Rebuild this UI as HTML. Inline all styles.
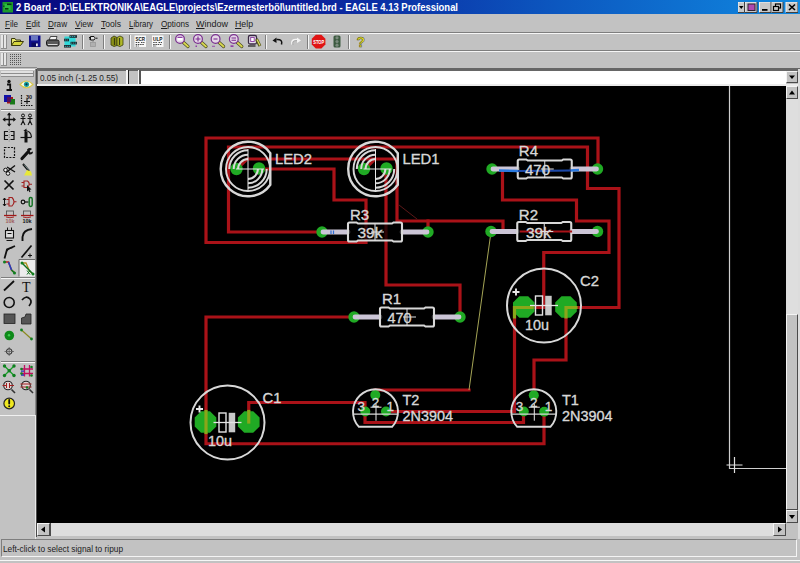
<!DOCTYPE html>
<html><head><meta charset="utf-8"><title>2 Board - EAGLE 4.13 Professional</title>
<style>
*{box-sizing:border-box;margin:0;padding:0}
html,body{width:800px;height:563px;overflow:hidden;background:#c2c2c2;font-family:"Liberation Sans",sans-serif;font-size:10px;color:#1c1c1c}
#app{position:relative;width:800px;height:563px;background:#c2c2c2;overflow:hidden}
#app div,#app span.ft,#app svg{position:absolute}
.ft{white-space:nowrap;transform-origin:0 50%;display:block}
.ft u{text-decoration:underline}
.dk{background:#7e7e7e}.lt{background:#f6f6f6}.bk{background:#000}
#title{left:0;top:0;width:800px;height:13.5px;background:linear-gradient(90deg,#08087e 0%,#0a1a96 35%,#0c58c0 70%,#1088e0 100%)}
.btn{background:#c2c2c2;border:1px solid;border-color:#f4f4f4 #4a4a4a #4a4a4a #f4f4f4}
.trk{background:#dedede}
</style></head><body><div id="app">

<div id="title">
<svg style="left:2px;top:1px" width="12" height="12" viewBox="0 0 12 12"><rect x="0.500" y="1" width="10.500" height="10.500" fill="#1c9a2c"/><rect x="2.500" y="3" width="6" height="6" fill="#30c848" opacity="0.700"/><rect x="5" y="2.500" width="4.500" height="1.600" fill="#083a10"/><rect x="3" y="7" width="3.500" height="1.600" fill="#083a10"/><rect x="1" y="4.500" width="1.500" height="1.500" fill="#0a5a18"/></svg>
<span class="ft" style="left:16px;top:0.8px;font-size:10px;line-height:14px;color:#fff;font-weight:bold;transform:scaleX(0.9436)">2 Board - D:\ELEKTRONIKA\EAGLE\projects\Ezermesterböl\untitled.brd - EAGLE 4.13 Professional</span>
</div>
<svg style="left:738px;top:2px" width="60" height="11" viewBox="0 0 60 11">
<rect x="0" y="0" width="6.500" height="10.500" fill="#c8c8c8"/><path d="M1 4h4.500l-2.250 3z" fill="#000"/>
<rect x="7" y="0" width="12" height="10.500" fill="#c8c8c8"/><rect x="10" y="2" width="7" height="6.500" fill="#b048b0" stroke="#302030" stroke-width="1"/>
<rect x="21.500" y="0" width="11.500" height="10.500" fill="#c8c8c8"/><rect x="24" y="7" width="5.500" height="1.800" fill="#000"/>
<rect x="33.500" y="0" width="11.500" height="10.500" fill="#c8c8c8"/><rect x="37.500" y="2" width="5" height="4" fill="none" stroke="#000" stroke-width="1.200"/><rect x="35.500" y="4.500" width="5" height="4" fill="#c8c8c8" stroke="#000" stroke-width="1.200"/>
<rect x="48" y="0" width="12" height="10.500" fill="#c8c8c8"/><path d="M51 2.500l6 5.500M57 2.500l-6 5.500" stroke="#000" stroke-width="1.600"/>
<path d="M0 10.500V0H6.500M7 10.500V0H19M21.500 10.500V0H33M33.500 10.500V0H45M48 10.500V0H60" fill="none" stroke="#f4f4f4" stroke-width="1"/>
<path d="M0 10.500H6.500V0M7 10.500H19V0M21.500 10.500H33V0M33.500 10.500H45V0M48 10.500H60V0" fill="none" stroke="#404040" stroke-width="1"/>
</svg>
<span class="ft" style="left:5px;top:17.3px;font-size:9.5px;line-height:14px;color:#202020;transform:scaleX(0.8492)"><u>F</u>ile</span>
<span class="ft" style="left:26px;top:17.3px;font-size:9.5px;line-height:14px;color:#202020;transform:scaleX(0.8552)"><u>E</u>dit</span>
<span class="ft" style="left:48px;top:17.3px;font-size:9.5px;line-height:14px;color:#202020;transform:scaleX(0.8570)"><u>D</u>raw</span>
<span class="ft" style="left:75px;top:17.3px;font-size:9.5px;line-height:14px;color:#202020;transform:scaleX(0.8815)"><u>V</u>iew</span>
<span class="ft" style="left:101px;top:17.3px;font-size:9.5px;line-height:14px;color:#202020;transform:scaleX(0.9018)"><u>T</u>ools</span>
<span class="ft" style="left:129px;top:17.3px;font-size:9.5px;line-height:14px;color:#202020;transform:scaleX(0.8265)"><u>L</u>ibrary</span>
<span class="ft" style="left:161px;top:17.3px;font-size:9.5px;line-height:14px;color:#202020;transform:scaleX(0.8552)"><u>O</u>ptions</span>
<span class="ft" style="left:196px;top:17.3px;font-size:9.5px;line-height:14px;color:#202020;transform:scaleX(0.9471)"><u>W</u>indow</span>
<span class="ft" style="left:235px;top:17.3px;font-size:9.5px;line-height:14px;color:#202020;transform:scaleX(0.9212)"><u>H</u>elp</span>
<div class="dk" style="left:0px;top:32px;width:800px;height:1px"></div><div class="lt" style="left:0px;top:33px;width:800px;height:1px"></div>
<div class="dk" style="left:0px;top:50px;width:800px;height:1px"></div><div class="lt" style="left:0px;top:51px;width:800px;height:1px"></div>
<div style="left:0;top:67px;width:37px;height:1px;background:#8a8a8a"></div>
<div style="left:1px;top:35px;width:2px;height:14px;background:#e6e6e6;border-right:1px solid #8e8e8e;border-bottom:1px solid #8e8e8e;width:3px"></div>
<div style="left:4px;top:35px;width:2px;height:14px;background:#e6e6e6;border-right:1px solid #8e8e8e;border-bottom:1px solid #8e8e8e;width:3px"></div>
<div style="left:1px;top:53px;width:2px;height:13px;background:#e6e6e6;border-right:1px solid #8e8e8e;border-bottom:1px solid #8e8e8e;width:3px"></div>
<div style="left:4px;top:53px;width:2px;height:13px;background:#e6e6e6;border-right:1px solid #8e8e8e;border-bottom:1px solid #8e8e8e;width:3px"></div>
<div class="dk" style="left:82px;top:35px;width:1px;height:14px"></div><div class="lt" style="left:83px;top:35px;width:1px;height:14px"></div>
<div class="dk" style="left:103px;top:35px;width:1px;height:14px"></div><div class="lt" style="left:104px;top:35px;width:1px;height:14px"></div>
<div class="dk" style="left:129px;top:35px;width:1px;height:14px"></div><div class="lt" style="left:130px;top:35px;width:1px;height:14px"></div>
<div class="dk" style="left:169px;top:35px;width:1px;height:14px"></div><div class="lt" style="left:170px;top:35px;width:1px;height:14px"></div>
<div class="dk" style="left:265px;top:35px;width:1px;height:14px"></div><div class="lt" style="left:266px;top:35px;width:1px;height:14px"></div>
<div class="dk" style="left:307px;top:35px;width:1px;height:14px"></div><div class="lt" style="left:308px;top:35px;width:1px;height:14px"></div>
<div class="dk" style="left:348px;top:35px;width:1px;height:14px"></div><div class="lt" style="left:349px;top:35px;width:1px;height:14px"></div>
<svg style="left:0;top:33px" width="400" height="18" viewBox="0 33 400 18" font-family="Liberation Sans, sans-serif"><path d="M11.500 45.500V38.500h3.500l1 1.500h4.500v2" fill="#e8e870" stroke="#3a3a10" stroke-width="1"/><path d="M11.500 45.500l2.500-4h9.500l-3 4z" fill="#d6d640" stroke="#3a3a10" stroke-width="1"/><rect x="29" y="35.500" width="11.500" height="11.500" fill="#10108c"/><rect x="31" y="35.500" width="7" height="5" fill="#6a78c0"/><rect x="31.500" y="42.500" width="6.500" height="4.500" fill="#0a0a60"/><rect x="36" y="43.500" width="1.800" height="2.700" fill="#e8e8f8"/><path d="M49 40l1.500-3.500h6.500l-1 3.500z" fill="#f4f4f4" stroke="#222" stroke-width="0.800"/><path d="M46.500 41.500q0-1.500 2-1.500h8.500q2 0 2 1.500v3q0 1-1.500 1.500h-9.500q-1.500-0.500-1.500-1.500z" fill="#5a5a5a" stroke="#1a1a1a" stroke-width="1"/><path d="M48 44.500h9.500" stroke="#d8d8d8" stroke-width="1"/><rect x="64.500" y="36.500" width="11" height="10" fill="#30d8d8"/><rect x="69.5" y="35.2" width="7.5" height="2.600" fill="#202830"/><rect x="70.3" y="36.05" width="0.900" height="0.900" fill="#40e0e0"/><rect x="72.3" y="36.05" width="0.900" height="0.900" fill="#40e0e0"/><rect x="74.3" y="36.05" width="0.900" height="0.900" fill="#40e0e0"/><rect x="64" y="38.7" width="5" height="2.600" fill="#202830"/><rect x="64.8" y="39.55" width="0.900" height="0.900" fill="#40e0e0"/><rect x="66.8" y="39.55" width="0.900" height="0.900" fill="#40e0e0"/><rect x="70.5" y="41.8" width="6.5" height="2.600" fill="#202830"/><rect x="71.3" y="42.65" width="0.900" height="0.900" fill="#40e0e0"/><rect x="73.3" y="42.65" width="0.900" height="0.900" fill="#40e0e0"/><rect x="75.3" y="42.65" width="0.900" height="0.900" fill="#40e0e0"/><rect x="64" y="45" width="7" height="2.600" fill="#202830"/><rect x="64.8" y="45.85" width="0.900" height="0.900" fill="#40e0e0"/><rect x="66.8" y="45.85" width="0.900" height="0.900" fill="#40e0e0"/><rect x="68.8" y="45.85" width="0.900" height="0.900" fill="#40e0e0"/><path d="M90.500 36.500h3.500q2.500 1.500 0 3.500h-3.500zM89 37.500h1.500M89 39h1.500M96 38.200h1.500" fill="#e0e0e0" stroke="#111" stroke-width="1"/><rect x="90.500" y="42.500" width="5" height="4" fill="#b0b0b0" stroke="#9a9a9a" stroke-width="0.800"/><path d="M93 40.500v1.500" stroke="#888" stroke-width="1"/><path d="M111 38l3-2 3 1.500v8l-3 1-3-1.500z" fill="#8a9018" stroke="#3a3c10" stroke-width="0.800"/><path d="M117 37.500l3-1.500 3 1.500v7.500l-3 1.500-3-1z" fill="#b0b828" stroke="#3a3c10" stroke-width="0.800"/><path d="M114.500 38v7M119.500 38v7" stroke="#3a3c10" stroke-width="1.200"/><rect x="134.5" y="35.500" width="11.500" height="11.500" fill="#f8f8f8"/><text x="135.5" y="40.600" font-size="5.200" font-weight="bold" fill="#111" textLength="9.500" lengthAdjust="spacingAndGlyphs">SCR</text><path d="M135.7 42.500h4M141 42.500h3.500M135.7 44.500h8.500M135.7 46h3" stroke="#333" stroke-width="0.900" stroke-dasharray="1.500 0.700"/><rect x="152" y="35.500" width="11.500" height="11.500" fill="#f8f8f8"/><text x="153" y="40.600" font-size="5.200" font-weight="bold" fill="#111" textLength="9.500" lengthAdjust="spacingAndGlyphs">ULP</text><path d="M153.2 42.500h4M158.5 42.500h3.500M153.2 44.500h8.500M153.2 46h3" stroke="#333" stroke-width="0.900" stroke-dasharray="1.500 0.700"/><path d="M183.5 42.5L188 46.5" stroke="#4a4a20" stroke-width="3.200" stroke-linecap="round"/><path d="M183.8 42.8L188 46.5" stroke="#d8d850" stroke-width="1.800" stroke-linecap="round"/><circle cx="180" cy="39" r="4.400" fill="#e4d6e6" stroke="#7a3090" stroke-width="1.200"/><rect x="177.500" y="37.500" width="5" height="3" fill="#fff"/><rect x="177.500" y="36.800" width="5" height="1.200" fill="#9040a8"/><path d="M201.5 42.5L206 46.5" stroke="#4a4a20" stroke-width="3.200" stroke-linecap="round"/><path d="M201.8 42.8L206 46.5" stroke="#d8d850" stroke-width="1.800" stroke-linecap="round"/><circle cx="198" cy="39" r="4.400" fill="#e4d6e6" stroke="#7a3090" stroke-width="1.200"/><path d="M195.500 39h5M198 36.500v5" stroke="#7a2a90" stroke-width="1.100"/><rect x="195.500" y="45.500" width="1.500" height="1.500" fill="#9040a8"/><path d="M219.1 42.5L223.6 46.5" stroke="#4a4a20" stroke-width="3.200" stroke-linecap="round"/><path d="M219.4 42.8L223.6 46.5" stroke="#d8d850" stroke-width="1.800" stroke-linecap="round"/><circle cx="215.6" cy="39" r="4.400" fill="#e4d6e6" stroke="#7a3090" stroke-width="1.200"/><path d="M213.500 39h4" stroke="#7a2a90" stroke-width="1.100"/><rect x="212" y="45.800" width="3" height="0.900" fill="#9040a8"/><path d="M237.3 42.5L241.8 46.5" stroke="#4a4a20" stroke-width="3.200" stroke-linecap="round"/><path d="M237.6 42.8L241.8 46.5" stroke="#d8d850" stroke-width="1.800" stroke-linecap="round"/><circle cx="233.8" cy="39" r="4.400" fill="#e4d6e6" stroke="#7a3090" stroke-width="1.200"/><path d="M231.500 38h4.500M231.500 40.200h4.500" stroke="#7a2a90" stroke-width="1.100"/><rect x="230.500" y="45.300" width="3" height="1.700" fill="#9040a8"/><rect x="248.500" y="35.500" width="8" height="8.500" rx="1.500" fill="#e8e0ec" stroke="#3a2a44" stroke-width="1.300"/><rect x="250.700" y="37.500" width="3.500" height="4" fill="#fff" stroke="#8a3aa0" stroke-width="0.900"/><path d="M248 46h7.500" stroke="#333" stroke-width="1.400"/><path d="M256.500 39l3.500 7" stroke="#55551c" stroke-width="3"/><path d="M257 39.500l3 6" stroke="#dede60" stroke-width="1.300"/><path d="M281.500 44.500q1.500-5.500-5-5" fill="none" stroke="#111" stroke-width="1.500"/><path d="M272.500 40.500l4-3v5.500z" fill="#111"/><path d="M292 44.500q-1.500-5.500 5-5" fill="none" stroke="#f4f4f4" stroke-width="1.500"/><path d="M301 40.500l-4-3v5.500z" fill="#f4f4f4"/><path d="M293 45q-1.500-4.500 4-4.500" fill="none" stroke="#9a9a9a" stroke-width="0.700"/><polygon points="325.4,44.4 321.4,48.4 315.8,48.4 311.8,44.4 311.8,38.8 315.8,34.8 321.4,34.8 325.4,38.8" fill="#e01414"/><text x="313.200" y="44" font-size="6.200" font-weight="bold" fill="#fff" textLength="11" lengthAdjust="spacingAndGlyphs">STOP</text><rect x="333.500" y="35.500" width="7" height="12" rx="1.500" fill="#3c5a40"/><circle cx="337" cy="37.8" r="1.600" fill="#7a8a7c"/><circle cx="337" cy="41.5" r="1.600" fill="#7a8a7c"/><circle cx="337" cy="45.2" r="1.600" fill="#7a8a7c"/><text x="356.500" y="46.500" font-size="14" font-weight="bold" fill="#f0e828" stroke="#4a4a10" stroke-width="0.500">?</text></svg>
<svg style="left:10px;top:54px" width="12" height="11"><rect x="0" y="0" width="1" height="1" fill="#555"/><rect x="0" y="2" width="1" height="1" fill="#555"/><rect x="0" y="4" width="1" height="1" fill="#555"/><rect x="0" y="6" width="1" height="1" fill="#555"/><rect x="0" y="8" width="1" height="1" fill="#555"/><rect x="0" y="10" width="1" height="1" fill="#555"/><rect x="2" y="0" width="1" height="1" fill="#555"/><rect x="2" y="2" width="1" height="1" fill="#555"/><rect x="2" y="4" width="1" height="1" fill="#555"/><rect x="2" y="6" width="1" height="1" fill="#555"/><rect x="2" y="8" width="1" height="1" fill="#555"/><rect x="2" y="10" width="1" height="1" fill="#555"/><rect x="4" y="0" width="1" height="1" fill="#555"/><rect x="4" y="2" width="1" height="1" fill="#555"/><rect x="4" y="4" width="1" height="1" fill="#555"/><rect x="4" y="6" width="1" height="1" fill="#555"/><rect x="4" y="8" width="1" height="1" fill="#555"/><rect x="4" y="10" width="1" height="1" fill="#555"/><rect x="6" y="0" width="1" height="1" fill="#555"/><rect x="6" y="2" width="1" height="1" fill="#555"/><rect x="6" y="4" width="1" height="1" fill="#555"/><rect x="6" y="6" width="1" height="1" fill="#555"/><rect x="6" y="8" width="1" height="1" fill="#555"/><rect x="6" y="10" width="1" height="1" fill="#555"/><rect x="8" y="0" width="1" height="1" fill="#555"/><rect x="8" y="2" width="1" height="1" fill="#555"/><rect x="8" y="4" width="1" height="1" fill="#555"/><rect x="8" y="6" width="1" height="1" fill="#555"/><rect x="8" y="8" width="1" height="1" fill="#555"/><rect x="8" y="10" width="1" height="1" fill="#555"/><rect x="10" y="0" width="1" height="1" fill="#555"/><rect x="10" y="2" width="1" height="1" fill="#555"/><rect x="10" y="4" width="1" height="1" fill="#555"/><rect x="10" y="6" width="1" height="1" fill="#555"/><rect x="10" y="8" width="1" height="1" fill="#555"/><rect x="10" y="10" width="1" height="1" fill="#555"/></svg>
<div style="left:37px;top:68px;width:763px;height:2.5px;background:#666"></div>
<div style="left:37px;top:70px;width:1px;height:14px;background:#6c6c6c"></div>
<div class="lt" style="left:126px;top:70px;width:2px;height:14px"></div>
<div style="left:128px;top:70px;width:1px;height:14px;background:#222"></div>
<div class="lt" style="left:138px;top:70px;width:1px;height:14px"></div>
<div style="left:139px;top:70px;width:2px;height:14px;background:#555"></div>
<div style="left:141px;top:70.5px;width:645px;height:13px;background:#fff"></div>
<div style="left:37px;top:83.5px;width:763px;height:2.5px;background:#ececec"></div>
<span class="ft" style="left:40px;top:71px;font-size:9.5px;line-height:13px;color:#1c1c1c;transform:scaleX(0.8637)">0.05 inch (-1.25 0.55)</span>
<div class="btn" style="left:786px;top:71px;width:12px;height:12px"></div>
<svg style="left:786px;top:71px" width="12" height="12"><path d="M3 4.500h6l-3 3.500z" fill="#000"/></svg>
<div class="lt" style="left:0;top:69px;width:36px;height:1px"></div>
<div style="left:1px;top:71px;width:33px;background:#e0e0e0;border-bottom:1px solid #8e8e8e;border-right:1px solid #8e8e8e;height:3px"></div>
<div style="left:1px;top:74px;width:33px;height:3px;background:#e0e0e0;border-bottom:1px solid #8e8e8e;border-right:1px solid #8e8e8e"></div>
<div style="left:35px;top:69px;width:1px;height:346px;background:#8a8a8a"></div>
<div style="left:36px;top:69px;width:1px;height:468px;background:#4a4a4a"></div>
<div style="left:0;top:415px;width:36px;height:1px;background:#f0f0f0"></div>
<div style="left:35px;top:415px;width:1px;height:125px;background:#e8e8e8"></div>
<div class="dk" style="left:1px;top:109px;width:34px;height:1px"></div><div class="lt" style="left:1px;top:110px;width:34px;height:1px"></div>
<div class="dk" style="left:1px;top:277px;width:34px;height:1px"></div><div class="lt" style="left:1px;top:278px;width:34px;height:1px"></div>
<div class="dk" style="left:1px;top:361px;width:34px;height:1px"></div><div class="lt" style="left:1px;top:362px;width:34px;height:1px"></div>
<svg style="left:0;top:77px" width="36" height="338" viewBox="0 77 36 338" font-family="Liberation Sans, sans-serif"><circle cx="9" cy="81.500" r="1.700" fill="#111"/><path d="M7 84.500h3.200v5M6.500 90h5.500" stroke="#111" stroke-width="1.800" fill="none"/><path d="M20 84.500q6.500-7 13 0q-6.500 6.500-13 0z" fill="#fbfbe8" stroke="#d8c850" stroke-width="1.200"/><circle cx="26.500" cy="84.300" r="2.600" fill="#18a0a0"/><circle cx="26.500" cy="84.300" r="1.100" fill="#0a3040"/><rect x="4" y="95" width="7" height="7" fill="#1010a8"/><rect x="7" y="97" width="6" height="6.500" fill="#a01818"/><rect x="10" y="99" width="5" height="5.500" fill="#187818"/><rect x="7" y="97" width="4" height="5" fill="#501060"/><path d="M21.500 95v10.500h11" fill="none" stroke="#111" stroke-width="1.200" stroke-dasharray="1.500 1"/><path d="M24 101.500h6M27 99v5" stroke="#111" stroke-width="1.100"/><text x="26" y="99" font-size="5.500" font-weight="bold" fill="#111">30</text><path d="M3.500 119.500h11.500M9.200 113.500v12" stroke="#111" stroke-width="1.300"/><path d="M9.200 112.500l2.300 2.800h-4.600zM9.200 126.500l2.300-2.800h-4.600zM2.500 119.500l2.800-2.300v4.600zM16 119.500l-2.800-2.300v4.600z" fill="#111"/><circle cx="23" cy="115.500" r="1.500" fill="none" stroke="#111" stroke-width="1"/><path d="M20.5 118.500h5M23 117.500v3.500l-2 4M23 121l2 4" stroke="#111" stroke-width="1.100" fill="none"/><circle cx="30" cy="115.500" r="1.500" fill="none" stroke="#111" stroke-width="1"/><path d="M27.5 118.500h5M30 117.500v3.500l-2 4M30 121l2 4" stroke="#111" stroke-width="1.100" fill="none"/><path d="M8 131.500H4.500v8H8M10.500 131.500H14v8h-3.500M5 135.500h3M11 135.500h3" fill="none" stroke="#111" stroke-width="1.200"/><path d="M9.200 129v13" stroke="#888" stroke-width="1" stroke-dasharray="1.500 1"/><rect x="24.500" y="132" width="3" height="10.500" fill="#111"/><path d="M20.500 137.500h11" stroke="#111" stroke-width="1.200"/><path d="M25 130.500q6 0.500 6.500 6.500" fill="none" stroke="#111" stroke-width="1.200"/><path d="M26.500 128.500l-3 2.200 3 2z" fill="#111"/><rect x="4.500" y="147.500" width="10" height="10" fill="none" stroke="#111" stroke-width="1.200" stroke-dasharray="2 1.300"/><path d="M22 158.500l6-6.500" stroke="#111" stroke-width="3.200" stroke-linecap="round"/><path d="M27 149.500q2.500-2.500 5-0.500l-2.500 2 1 1.500 2.500-1q0 3.500-4 3z" fill="#111"/><path d="M6 172.500l9-7M7 167l8 5" stroke="#111" stroke-width="1.400"/><circle cx="5.500" cy="170" r="1.800" fill="#eee" stroke="#111" stroke-width="1"/><circle cx="8" cy="173.500" r="1.800" fill="#eee" stroke="#111" stroke-width="1"/><path d="M23 164l6 7" stroke="#111" stroke-width="2"/><path d="M24 164.500l5 6" stroke="#8aa" stroke-width="0.700"/><path d="M27 170l4 1.500 1 4h-8z" fill="#e8e838"/><path d="M4.500 180.500l9 9M13.500 180.500l-9 9" stroke="#111" stroke-width="1.700"/><path d="M24 181h3.500q3.500 2.500 0 6.500H24zM21.500 182.500h2.500M21.500 186h2.500M29.500 184.200h2.500" fill="none" stroke="#a02020" stroke-width="1.100"/><path d="M27 185l4.500 4.500-2 0.300 1 2-1 0.500-1-2-1.500 1.200z" fill="#111"/><path d="M9 197.500h3q4 4.200 0 8.500h-3zM6.500 199.500h2.500M6.500 204h2.500M14.500 201.700h2" fill="none" stroke="#a02020" stroke-width="1.100"/><path d="M4.500 198v8M3 200l1.500-2 1.500 2M3 204l1.500 2 1.500-2" fill="none" stroke="#111" stroke-width="1"/><circle cx="23" cy="202" r="1.800" fill="none" stroke="#111" stroke-width="1.200"/><path d="M25 202h3.500" stroke="#111" stroke-width="1.200"/><rect x="29.200" y="197.500" width="3" height="9" rx="1.400" fill="none" stroke="#107020" stroke-width="1.400"/><rect x="6.5" y="211" width="7" height="4.500" fill="none" stroke="#555" stroke-width="0.900"/><path d="M4 215.500h12.500" stroke="#a01818" stroke-width="1.300"/><path d="M6 217q4 1.500 8 0" stroke="#a01818" stroke-width="0.900" fill="none"/><text x="5.5" y="223" font-size="5.500" font-weight="bold" fill="#a06060">10k</text><rect x="23.5" y="211" width="7" height="4.500" fill="none" stroke="#555" stroke-width="0.900"/><path d="M21 215.500h12.500" stroke="#a01818" stroke-width="1.300"/><path d="M23 217q4 1.500 8 0" stroke="#a01818" stroke-width="0.900" fill="none"/><text x="22.5" y="223" font-size="5.500" font-weight="bold" fill="#111">10k</text><rect x="5.500" y="230.500" width="8" height="7.500" fill="#ddd" stroke="#111" stroke-width="1.100"/><path d="M7.500 230v-2.500M11.500 230v-2.500M7.500 233.500h4M6.500 240.500h6" stroke="#111" stroke-width="1"/><path d="M22.500 241v-4q0.500-7 9.500-8" fill="none" stroke="#111" stroke-width="1.900"/><path d="M4.500 258.500l2.500-9 8-3.500" fill="none" stroke="#111" stroke-width="1.800"/><path d="M6 252q3-4 7-4.500" fill="none" stroke="#111" stroke-width="0.900"/><path d="M21.500 257.500l10-12" stroke="#111" stroke-width="1.700"/><path d="M28 255.500h4M30 253.500v4" stroke="#111" stroke-width="1"/><path d="M4.500 262h4l3 8 3.500 3" fill="none" stroke="#b02020" stroke-width="1.500"/><path d="M8.500 262l3 8" stroke="#2040c0" stroke-width="1.500"/><circle cx="4.500" cy="262" r="1.500" fill="#108020"/><circle cx="14.500" cy="273" r="1.500" fill="#108020"/><path d="M11.500 270l3 3" stroke="#108020" stroke-width="1.600"/><rect x="19" y="259.500" width="16" height="17" fill="#ececec"/><path d="M19 276.500V259.500H35" fill="none" stroke="#6a6a6a" stroke-width="1"/><path d="M22 263h4l3.500 8 3.500 3" fill="none" stroke="#b09020" stroke-width="1.300"/><path d="M22 263l11 11" stroke="#107020" stroke-width="1.400"/><circle cx="22" cy="263" r="1.500" fill="#108020"/><circle cx="33" cy="274" r="1.500" fill="#108020"/><path d="M27 270.500l3 4M30 270.500l-3 4" stroke="#107020" stroke-width="1"/><path d="M4 290.500l10-9.500" stroke="#111" stroke-width="1.800"/><text x="22" y="291.500" font-family="Liberation Serif, serif" font-size="14" fill="#111">T</text><circle cx="9.200" cy="302.500" r="5" fill="none" stroke="#111" stroke-width="1.600"/><path d="M22 300q4-5 8-1q2.500 3-1 7" fill="none" stroke="#111" stroke-width="1.700"/><rect x="4" y="314" width="11" height="9.500" fill="#555" stroke="#222" stroke-width="0.800"/><path d="M21.500 324v-6l3.500-1 1-3h5v10z" fill="#555" stroke="#222" stroke-width="0.800"/><circle cx="9.300" cy="335.500" r="4.800" fill="#0f8a1a"/><circle cx="9" cy="335.200" r="1.200" fill="#40d050"/><path d="M21.500 330l10 9" stroke="#8a8a20" stroke-width="1.200"/><circle cx="21.500" cy="330" r="1.400" fill="#108020"/><circle cx="31.500" cy="339" r="1.400" fill="#108020"/><circle cx="9.200" cy="351.500" r="2.800" fill="none" stroke="#222" stroke-width="1"/><path d="M4.500 351.500h9.500M9.200 347v9" stroke="#555" stroke-width="0.700"/><path d="M4.500 366l9.500 9.500M14 366l-9.500 9.500" stroke="#18a028" stroke-width="1.300"/><circle cx="4.5" cy="366" r="1.700" fill="#108020"/><circle cx="14" cy="366" r="1.700" fill="#108020"/><circle cx="4.5" cy="375.5" r="1.700" fill="#108020"/><circle cx="14" cy="375.5" r="1.700" fill="#108020"/><circle cx="9.2" cy="370.7" r="1.700" fill="#108020"/><path d="M21 369h12M21 373.500h12" stroke="#c01060" stroke-width="1.300"/><path d="M24.500 365v11.500M29.500 365v11.500" stroke="#c01060" stroke-width="1.300"/><path d="M21 371.200h3M21 375h3" stroke="#2030c0" stroke-width="1.300"/><circle cx="21.5" cy="369" r="1.300" fill="#108020"/><circle cx="21.5" cy="373.5" r="1.300" fill="#108020"/><circle cx="31.5" cy="367" r="1.300" fill="#108020"/><circle cx="31.5" cy="375.5" r="1.300" fill="#108020"/><circle cx="8" cy="385.500" r="4.300" fill="#e4d4d4" stroke="#222" stroke-width="1.100"/><path d="M2.500 385.500h4M10 385.500h4M6.500 383v5M9.500 383v5" stroke="#a02020" stroke-width="1"/><path d="M11.500 389.500l3.500 3.500" stroke="#333" stroke-width="1.600"/><circle cx="26" cy="385.500" r="4.300" fill="#e4d4d4" stroke="#222" stroke-width="1.100"/><path d="M20.500 384h11M20.500 387h11" stroke="#a02020" stroke-width="1.100"/><circle cx="27" cy="387.500" r="1.300" fill="#108020"/><path d="M29.500 389.500l3.500 3.500" stroke="#333" stroke-width="1.600"/><circle cx="9.200" cy="403.500" r="5.300" fill="#f0e820" stroke="#222" stroke-width="1.200"/><path d="M9.200 400v3.500" stroke="#111" stroke-width="1.800" stroke-linecap="round"/><circle cx="9.200" cy="406.300" r="1" fill="#111"/></svg>
<div id="cv" class="bk" style="left:37px;top:86px;width:749px;height:437px"></div>
<svg style="left:37px;top:86px" width="749" height="437" viewBox="37 86 749 437" font-family="Liberation Sans, sans-serif"><path d="M729.500 86V468.500H786" fill="none" stroke="#cfcfcf" stroke-width="1.200"/><polyline points="259,169 334,169 334,200 366,200 366,242.5 206,242.5 206,138 598,138 598,169" fill="none" stroke="#aa1218" stroke-width="3.2" stroke-linejoin="miter" stroke-linecap="square" /><polyline points="322,232 228.5,232 228.5,147 587.5,147 587.5,188.5 619,188.5 619,307.5 566,307.5 566,360 534,360 534,396" fill="none" stroke="#aa1218" stroke-width="3.2" stroke-linejoin="miter" stroke-linecap="square" /><polyline points="237,169 247,159 397,159 397,221 503,221 503,232 491,232" fill="none" stroke="#aa1218" stroke-width="3.2" stroke-linejoin="miter" stroke-linecap="square" /><polyline points="365,169 375,159" fill="none" stroke="#aa1218" stroke-width="3.2" stroke-linejoin="miter" stroke-linecap="square" /><polyline points="428,221 428,232" fill="none" stroke="#aa1218" stroke-width="3.2" stroke-linejoin="miter" stroke-linecap="square" /><polyline points="386,169 386,285 460,285 460,317" fill="none" stroke="#aa1218" stroke-width="3.2" stroke-linejoin="miter" stroke-linecap="square" /><polyline points="492,169 502.5,169 502.5,200 576.5,200 576.5,221 609,221 609,252.5 543.75,252.5 543.75,307.5 514.5,307.5 514.5,411.5 386,411.5" fill="none" stroke="#aa1218" stroke-width="3.2" stroke-linejoin="miter" stroke-linecap="square" /><polyline points="248.75,422 248.75,402.5 365,402.5 365,422.5 523.5,422.5 523.5,411" fill="none" stroke="#aa1218" stroke-width="3.2" stroke-linejoin="miter" stroke-linecap="square" /><polyline points="354,317 206,317 206,443.75 544,443.75 544,411.5" fill="none" stroke="#aa1218" stroke-width="3.2" stroke-linejoin="miter" stroke-linecap="square" /><polyline points="375,395 375,390 469,390" fill="none" stroke="#aa1218" stroke-width="3.2" stroke-linejoin="miter" stroke-linecap="square" /><polyline points="399,205 417,219" fill="none" stroke="#5c1818" stroke-width="1" stroke-linejoin="miter" stroke-linecap="square" /><path d="M469 390L491 232" stroke="#b8b860" stroke-width="0.900"/><circle cx="236.5" cy="169" r="6.2" fill="#20aa24"/><circle cx="259" cy="168.5" r="6.2" fill="#20aa24"/><circle cx="364" cy="169" r="6.2" fill="#20aa24"/><circle cx="386.5" cy="168.5" r="6.2" fill="#20aa24"/><circle cx="322" cy="232" r="5.7" fill="#20aa24"/><circle cx="428" cy="232" r="5.7" fill="#20aa24"/><circle cx="354" cy="317" r="5.7" fill="#20aa24"/><circle cx="460" cy="317" r="5.7" fill="#20aa24"/><circle cx="492" cy="169" r="5.7" fill="#20aa24"/><circle cx="597.5" cy="169" r="5.7" fill="#20aa24"/><circle cx="491" cy="231.5" r="5.7" fill="#20aa24"/><circle cx="597.5" cy="231.5" r="5.7" fill="#20aa24"/><circle cx="375.3" cy="395" r="5" fill="#20aa24"/><circle cx="365.3" cy="411.5" r="5" fill="#20aa24"/><circle cx="386" cy="411.5" r="5" fill="#20aa24"/><circle cx="533.8" cy="395.2" r="5" fill="#20aa24"/><circle cx="523.8" cy="411.5" r="5" fill="#20aa24"/><circle cx="544.2" cy="411.8" r="5" fill="#20aa24"/><polygon points="216.3,426.5 210.0,432.8 201.0,432.8 194.7,426.5 194.7,417.5 201.0,411.2 210.0,411.2 216.3,417.5" fill="#20aa24"/><polygon points="259.6,426.5 253.2,432.8 244.3,432.8 237.9,426.5 237.9,417.5 244.3,411.2 253.2,411.2 259.6,417.5" fill="#20aa24"/><polygon points="534.5,311.5 528.2,317.8 519.3,317.8 513.0,311.5 513.0,302.5 519.3,296.2 528.2,296.2 534.5,302.5" fill="#20aa24"/><polygon points="576.8,311.5 570.5,317.8 561.5,317.8 555.2,311.5 555.2,302.5 561.5,296.2 570.5,296.2 576.8,302.5" fill="#20aa24"/><polyline points="206,411.5 206,432.5" fill="none" stroke="#8aa61a" stroke-width="3.2" stroke-linejoin="miter" stroke-linecap="square" /><polyline points="248.75,422 248.75,411.5" fill="none" stroke="#8aa61a" stroke-width="3.2" stroke-linejoin="miter" stroke-linecap="square" /><polyline points="532,307.5 514.5,307.5 514.5,317" fill="none" stroke="#8aa61a" stroke-width="3.2" stroke-linejoin="miter" stroke-linecap="square" /><polyline points="566,317 566,307.5 576,307.5" fill="none" stroke="#8aa61a" stroke-width="3.2" stroke-linejoin="miter" stroke-linecap="square" /><path d="M493 170L540 171.500L596 169.500" stroke="#2f6fd6" stroke-width="1.600" fill="none"/><path d="M270.3 153.252A27.3 27.3 0 1 0 270.3 184.748Z" fill="none" stroke="#d8d8d8" stroke-width="2.4"/><circle cx="248" cy="169" r="22" fill="none" stroke="#d8d8d8" stroke-width="1.9"/><path d="M238.1 169A9.9 9.9 0 0 1 248 159.1" fill="none" stroke="#d8d8d8" stroke-width="2"/><path d="M248 178.9A9.9 9.9 0 0 0 257.9 169" fill="none" stroke="#d8d8d8" stroke-width="2"/><path d="M233.7 169A14.3 14.3 0 0 1 248 154.7" fill="none" stroke="#d8d8d8" stroke-width="2"/><path d="M248 183.3A14.3 14.3 0 0 0 262.3 169" fill="none" stroke="#d8d8d8" stroke-width="2"/><path d="M229.3 169A18.7 18.7 0 0 1 248 150.3" fill="none" stroke="#d8d8d8" stroke-width="2"/><path d="M248 187.7A18.7 18.7 0 0 0 266.7 169" fill="none" stroke="#d8d8d8" stroke-width="2"/><path d="M248 149V190M236 169H264" stroke="#e8e8e8" stroke-width="1"/><text x="275" y="163.8" font-size="14.8" fill="#d8d8d8" stroke="#d8d8d8" stroke-width="0.35">LED2</text><path d="M397.8 153.252A27.3 27.3 0 1 0 397.8 184.748Z" fill="none" stroke="#d8d8d8" stroke-width="2.4"/><circle cx="375.5" cy="169" r="22" fill="none" stroke="#d8d8d8" stroke-width="1.9"/><path d="M365.6 169A9.9 9.9 0 0 1 375.5 159.1" fill="none" stroke="#d8d8d8" stroke-width="2"/><path d="M375.5 178.9A9.9 9.9 0 0 0 385.4 169" fill="none" stroke="#d8d8d8" stroke-width="2"/><path d="M361.2 169A14.3 14.3 0 0 1 375.5 154.7" fill="none" stroke="#d8d8d8" stroke-width="2"/><path d="M375.5 183.3A14.3 14.3 0 0 0 389.8 169" fill="none" stroke="#d8d8d8" stroke-width="2"/><path d="M356.8 169A18.7 18.7 0 0 1 375.5 150.3" fill="none" stroke="#d8d8d8" stroke-width="2"/><path d="M375.5 187.7A18.7 18.7 0 0 0 394.2 169" fill="none" stroke="#d8d8d8" stroke-width="2"/><path d="M375.5 149V190M363.5 169H391.5" stroke="#e8e8e8" stroke-width="1"/><text x="402.5" y="163.8" font-size="14.8" fill="#d8d8d8" stroke="#d8d8d8" stroke-width="0.35">LED1</text><path d="M323 232H348M402 232H427" stroke="#cbc5d6" stroke-width="4.8" stroke-linecap="round"/><path d="M349.5 222.5 h7 l1.500 1 H392 l1.500 -1 h7 q1.500 0 1.500 1.500 V240 q0 1.500 -1.500 1.500 h-7 l-1.500 -1 H358 l-1.500 1 h-7 q-1.500 0 -1.500 -1.500 V224 q0 -1.500 1.500 -1.500Z" fill="#000" fill-opacity="0.72" stroke="#d8d8d8" stroke-width="2.100"/><path d="M355 317H380M434 317H459" stroke="#cbc5d6" stroke-width="4.8" stroke-linecap="round"/><path d="M381.5 307.5 h7 l1.500 1 H424 l1.500 -1 h7 q1.500 0 1.500 1.500 V325 q0 1.500 -1.500 1.500 h-7 l-1.500 -1 H390 l-1.500 1 h-7 q-1.500 0 -1.500 -1.500 V309 q0 -1.500 1.500 -1.500Z" fill="#000" fill-opacity="0.72" stroke="#d8d8d8" stroke-width="2.100"/><path d="M493 169H517.75M571.75 169H596.5" stroke="#cbc5d6" stroke-width="4.8" stroke-linecap="round"/><path d="M519.25 159.5 h7 l1.500 1 H561.75 l1.500 -1 h7 q1.500 0 1.500 1.500 V177 q0 1.500 -1.500 1.500 h-7 l-1.500 -1 H527.75 l-1.500 1 h-7 q-1.500 0 -1.500 -1.500 V161 q0 -1.500 1.500 -1.500Z" fill="#000" fill-opacity="0.72" stroke="#d8d8d8" stroke-width="2.100"/><path d="M492 231.5H517.25M571.25 231.5H596.5" stroke="#cbc5d6" stroke-width="4.8" stroke-linecap="round"/><path d="M518.75 222 h7 l1.500 1 H561.25 l1.500 -1 h7 q1.500 0 1.500 1.500 V239.5 q0 1.500 -1.500 1.500 h-7 l-1.500 -1 H527.25 l-1.500 1 h-7 q-1.500 0 -1.500 -1.500 V223.5 q0 -1.500 1.500 -1.500Z" fill="#000" fill-opacity="0.72" stroke="#d8d8d8" stroke-width="2.100"/><polyline points="521,231.5 571,231.5" fill="none" stroke="#aa1218" stroke-width="2.2" stroke-linejoin="miter" stroke-linecap="square" /><path d="M499 170.500L518 171M571 170.500L579 170" stroke="#2a7ae0" stroke-width="2.400" fill="none"/><path d="M518 171L571 170.500" stroke="#1c48a8" stroke-width="1.800" fill="none"/><path d="M331 230.500v3.500M333.500 230.500v3.500" stroke="#2f6fd6" stroke-width="1.200" fill="none"/><path d="M375 224V241M371 232H384" stroke="#e0e0e0" stroke-width="1"/><text x="350" y="220" font-size="15" fill="#d8d8d8" stroke="#d8d8d8" stroke-width="0.35">R3</text><text x="357.5" y="238" font-size="15" fill="#d8d8d8" stroke="#d8d8d8" stroke-width="0.35" textLength="25" lengthAdjust="spacingAndGlyphs">39k</text><path d="M407 309V326M403 317H416" stroke="#e0e0e0" stroke-width="1"/><text x="382" y="303.8" font-size="15" fill="#d8d8d8" stroke="#d8d8d8" stroke-width="0.35">R1</text><text x="387.5" y="322.8" font-size="15" fill="#d8d8d8" stroke="#d8d8d8" stroke-width="0.35" textLength="24" lengthAdjust="spacingAndGlyphs">470</text><path d="M544.75 161V178M540.75 169H553.75" stroke="#e0e0e0" stroke-width="1"/><text x="518.8" y="156" font-size="15" fill="#d8d8d8" stroke="#d8d8d8" stroke-width="0.35">R4</text><text x="525" y="174.8" font-size="15" fill="#d8d8d8" stroke="#d8d8d8" stroke-width="0.35" textLength="25" lengthAdjust="spacingAndGlyphs">470</text><path d="M544.25 223.5V240.5M540.25 231.5H553.25" stroke="#e0e0e0" stroke-width="1"/><text x="518.8" y="220" font-size="15" fill="#d8d8d8" stroke="#d8d8d8" stroke-width="0.35">R2</text><text x="526" y="238" font-size="15" fill="#d8d8d8" stroke="#d8d8d8" stroke-width="0.35" textLength="25" lengthAdjust="spacingAndGlyphs">39k</text><path d="M358.729 426.7A22.5 22.5 0 1 1 392.271 426.7Z" fill="none" stroke="#d8d8d8" stroke-width="1.900"/><path d="M353.139 414.2H397.861" stroke="#d8d8d8" stroke-width="1.300"/><path d="M517.029 426.7A22.5 22.5 0 1 1 550.571 426.7Z" fill="none" stroke="#d8d8d8" stroke-width="1.900"/><path d="M511.439 414.2H556.161" stroke="#d8d8d8" stroke-width="1.300"/><circle cx="227.5" cy="422.5" r="37" fill="none" stroke="#d8d8d8" stroke-width="2"/><circle cx="544" cy="305.5" r="37" fill="none" stroke="#d8d8d8" stroke-width="2"/><path d="M376 403.7V420.7M370.5 407.2H381.5" stroke="#e8e8e8" stroke-width="1"/><text x="357.5" y="411.2" font-size="13.5" fill="#d8d8d8" stroke="#d8d8d8" stroke-width="0.35">3</text><text x="371.7" y="407.2" font-size="13.5" fill="#d8d8d8" stroke="#d8d8d8" stroke-width="0.35">2</text><text x="386.5" y="411.2" font-size="13.5" fill="#d8d8d8" stroke="#d8d8d8" stroke-width="0.35">1</text><text x="402.5" y="405" font-size="14.5" fill="#d8d8d8" stroke="#d8d8d8" stroke-width="0.35">T2</text><text x="402.5" y="421" font-size="14.5" fill="#d8d8d8" stroke="#d8d8d8" stroke-width="0.35" textLength="50.5" lengthAdjust="spacingAndGlyphs">2N3904</text><path d="M534.3 403.7V420.7M528.8 407.2H539.8" stroke="#e8e8e8" stroke-width="1"/><text x="515.8" y="411.2" font-size="13.5" fill="#d8d8d8" stroke="#d8d8d8" stroke-width="0.35">3</text><text x="530" y="407.2" font-size="13.5" fill="#d8d8d8" stroke="#d8d8d8" stroke-width="0.35">2</text><text x="544.8" y="411.2" font-size="13.5" fill="#d8d8d8" stroke="#d8d8d8" stroke-width="0.35">1</text><text x="562" y="405" font-size="14.5" fill="#d8d8d8" stroke="#d8d8d8" stroke-width="0.35">T1</text><text x="562" y="421" font-size="14.5" fill="#d8d8d8" stroke="#d8d8d8" stroke-width="0.35" textLength="50.5" lengthAdjust="spacingAndGlyphs">2N3904</text><rect x="219" y="413" width="7" height="19" fill="none" stroke="#e4e4e4" stroke-width="1.400"/><rect x="228.7" y="412.8" width="6.500" height="19.500" fill="#c8c8c8"/><path d="M213.5 422.5H241.5" stroke="#e4e4e4" stroke-width="1.300"/><path d="M196 409H203M199.5 405.5V412.5" stroke="#e8e8e8" stroke-width="1.900"/><text x="262.5" y="403" font-size="14.8" fill="#d8d8d8" stroke="#d8d8d8" stroke-width="0.35">C1</text><text x="208" y="446" font-size="14.5" fill="#d8d8d8" stroke="#d8d8d8" stroke-width="0.35" textLength="24" lengthAdjust="spacingAndGlyphs">10u</text><rect x="535.5" y="296" width="7" height="19" fill="none" stroke="#e4e4e4" stroke-width="1.400"/><rect x="545.2" y="295.8" width="6.500" height="19.500" fill="#c8c8c8"/><path d="M530 305.5H558" stroke="#e4e4e4" stroke-width="1.300"/><path d="M512.5 292H519.5M516 288.5V295.5" stroke="#e8e8e8" stroke-width="1.900"/><text x="580" y="286" font-size="14.8" fill="#d8d8d8" stroke="#d8d8d8" stroke-width="0.35">C2</text><text x="525" y="330" font-size="14.5" fill="#d8d8d8" stroke="#d8d8d8" stroke-width="0.35" textLength="24" lengthAdjust="spacingAndGlyphs">10u</text><path d="M726.500 465H742.500M734.500 457V473" stroke="#e0e0e0" stroke-width="1.200"/></svg>
<div class="trk" style="left:786px;top:86px;width:12px;height:437px"></div>
<div class="btn" style="left:786px;top:86px;width:12px;height:13px"></div>
<svg style="left:786px;top:86px" width="12" height="13"><path d="M3 8.500h6l-3-4z" fill="#000"/></svg>
<div class="btn" style="left:786px;top:510px;width:12px;height:13px"></div>
<svg style="left:786px;top:510px" width="12" height="13"><path d="M3 5h6l-3 4z" fill="#000"/></svg>
<div class="btn" style="left:786px;top:314px;width:12px;height:196px"></div>
<div class="trk" style="left:37px;top:523px;width:749px;height:13px"></div>
<div class="btn" style="left:37px;top:523px;width:13px;height:13px"></div>
<svg style="left:37px;top:523px" width="13" height="13"><path d="M8 3.500v6l-4-3z" fill="#000"/></svg>
<div class="btn" style="left:773px;top:523px;width:13px;height:13px"></div>
<svg style="left:773px;top:523px" width="13" height="13"><path d="M5 3.500v6l4-3z" fill="#000"/></svg>
<div style="left:50px;top:523px;width:1px;height:13px;background:#4a4a4a"></div>
<div style="left:798px;top:69px;width:2px;height:470px;background:#dcdcdc"></div>
<div style="left:1px;top:539px;width:796px;height:18px;border:1px solid;border-color:#7e7e7e #f4f4f4 #f4f4f4 #7e7e7e"></div>
<span class="ft" style="left:3px;top:542px;font-size:9.5px;line-height:13px;color:#1c1c1c;transform:scaleX(0.8741)">Left-click to select signal to ripup</span>
<div class="lt" style="left:0;top:560px;width:800px;height:1px"></div>
</div></body></html>
